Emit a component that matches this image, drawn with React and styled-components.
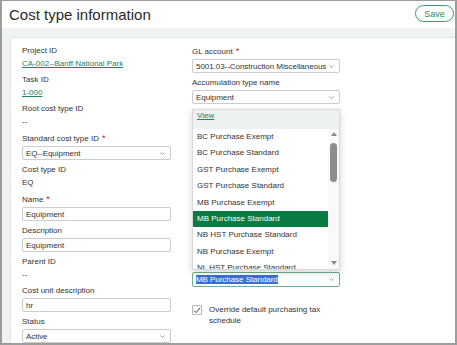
import React from 'react'
import styled, {createGlobalStyle} from 'styled-components'

const Global = createGlobalStyle`
  html, body { margin: 0; padding: 0; }
  body {
    font-family: "Liberation Sans", Arial, sans-serif;
    overflow: hidden;
  }
`

const Frame = styled.div`
  width: 457px;
  height: 345px;
  box-sizing: border-box;
  border: 2px solid #9d9d9d;
  border-top-width: 1px;
  background: #f0f3f3;
  overflow: hidden;
  display: flex;
  flex-direction: column;
`

const Header = styled.header`
  height: 27px;
  flex-shrink: 0;
  background: #fff;
  display: flex;
  align-items: center;
  justify-content: space-between;
  padding: 0 1px 0 7px;
`

const Title = styled.h1`
  margin: 0;
  font-size: 15px;
  font-weight: 400;
  color: #2a2a2a;
`

const SaveButton = styled.button`
  align-self: flex-start;
  margin-top: 4px;
  width: 39px;
  height: 17px;
  padding: 0;
  border: 1px solid #3a9b6b;
  border-radius: 9px;
  background: #fff;
  color: #2f8a5c;
  font-family: inherit;
  font-size: 9px;
`

const Body = styled.main`
  flex: 1;
  padding: 9px 0 0 8px;
`

const Card = styled.section`
  height: 100%;
  box-sizing: border-box;
  background: #fff;
  border: 1px solid #e1e5e5;
  border-right: none;
  border-bottom: none;
  border-radius: 4px 0 0 0;
  padding: 7px 0 0 11px;
  display: grid;
  grid-template-columns: 149px 148px;
  column-gap: 21px;
  align-items: start;
`

const Column = styled.div`
  display: flex;
  flex-direction: column;
  gap: 4px;
`

const Field = styled.div`
  display: flex;
  flex-direction: column;
  gap: 1px;
  margin-top: ${({$push}) => ($push ? `${$push}px` : '0')};
`

const Label = styled.label`
  font-size: 8px;
  line-height: 12px;
  color: #333;
`

const Req = styled.span`
  color: #c8102e;
  font-size: 9px;
  margin-left: 3px;
`

const Value = styled.div`
  font-size: 8px;
  line-height: 12px;
  color: #333;
`

const LinkValue = styled.a`
  font-size: 8px;
  line-height: 12px;
  color: #22845a;
  text-decoration: underline;
  align-self: flex-start;
`

const Input = styled.input`
  height: 14px;
  box-sizing: border-box;
  border: 1px solid #c9cdcd;
  border-radius: 2px;
  padding: 0 3px;
  font-family: inherit;
  font-size: 8px;
  color: #333;
  outline: none;
`

const SelectWrap = styled.div`
  position: relative;
`

const SelectBox = styled.div`
  height: ${({$tall}) => ($tall ? '15px' : '14px')};
  box-sizing: border-box;
  border: 1px solid ${({$focus}) => ($focus ? '#6aae8c' : '#c9cdcd')};
  border-radius: 2px;
  padding: 0 5px 0 3px;
  display: flex;
  align-items: center;
  gap: 3px;
  font-size: 8px;
  color: #333;
`

const SelectText = styled.span`
  flex: 1;
  min-width: 0;
  white-space: nowrap;
  overflow: hidden;
  letter-spacing: -0.05px;
`

const Highlight = styled.span`
  background: #3b6fd4;
  color: #fff;
`

const Popup = styled.div`
  position: absolute;
  left: 0;
  right: 0;
  bottom: calc(100% + 2px);
  height: 161px;
  box-sizing: border-box;
  background: #fff;
  border: 1px solid #d6dada;
  box-shadow: 0 2px 7px rgba(0, 0, 0, 0.18);
  z-index: 2;
  display: flex;
  flex-direction: column;
`

const PopupHead = styled.div`
  height: 19px;
  flex-shrink: 0;
  background: #edf1f2;
  padding-left: 4px;
  display: flex;
  align-items: center;
  font-size: 8px;
`

const PopupBody = styled.div`
  flex: 1;
  display: flex;
  min-height: 0;
`

const OptionList = styled.ul`
  flex: 1;
  margin: 0;
  padding: 0;
  list-style: none;
  overflow: hidden;
`

const Option = styled.li`
  height: 16.4px;
  line-height: 16.4px;
  padding-left: 4px;
  font-size: 8px;
  white-space: nowrap;
  background: ${({$selected}) => ($selected ? '#0a7b43' : 'transparent')};
  color: ${({$selected}) => ($selected ? '#fff' : '#333')};
`

const ScrollTrack = styled.div`
  width: 11px;
  background: #f9f9f9;
  display: flex;
  flex-direction: column;
  align-items: center;
`

const Arrow = styled.div`
  width: 0;
  height: 0;
  border-left: 3.5px solid transparent;
  border-right: 3.5px solid transparent;
  ${({$down}) =>
    $down
      ? 'border-top: 4px solid #8a8a8a; margin-top: auto; margin-bottom: 4px;'
      : 'border-bottom: 4px solid #8a8a8a; margin-top: 3px;'}
`

const Thumb = styled.div`
  width: 7px;
  height: 39px;
  margin-top: 7px;
  border-radius: 4px;
  background: #8d8d8d;
`

const CheckRow = styled.label`
  display: flex;
  align-items: flex-start;
  gap: 7px;
  margin-top: 14px;
`

const CheckBox = styled.span`
  width: 10px;
  height: 10px;
  flex-shrink: 0;
  box-sizing: border-box;
  border: 1px solid #b8b8b8;
  border-radius: 1px;
  display: flex;
  align-items: center;
  justify-content: center;
`

const CheckText = styled.span`
  font-size: 8px;
  line-height: 10.5px;
  color: #333;
  width: 128px;
`

const Chevron = () => (
  <svg width="5" height="3" viewBox="0 0 5 3">
    <path d="M0.5 0.5 L2.5 2.5 L4.5 0.5" fill="none" stroke="#8a8a8a" strokeWidth="0.8" />
  </svg>
)

const Select = ({children, focus, tall, label}) => (
  <SelectBox $focus={focus} $tall={tall} role="combobox" aria-label={label}>
    <SelectText>{children}</SelectText>
    <Chevron />
  </SelectBox>
)

const taxOptions = [
  'BC Purchase Exempt',
  'BC Purchase Standard',
  'GST Purchase Exempt',
  'GST Purchase Standard',
  'MB Purchase Exempt',
  'MB Purchase Standard',
  'NB HST Purchase Standard',
  'NB Purchase Exempt',
  'NL HST Purchase Standard',
  'NS HST Purchase Standard',
]

const App = () => {
  const selected = 'MB Purchase Standard'

  return (
    <Frame>
      <Global />
      <Header>
        <Title>Cost type information</Title>
        <SaveButton>Save</SaveButton>
      </Header>
      <Body>
        <Card>
          <Column>
            <Field>
              <Label>Project ID</Label>
              <LinkValue href="#">CA-002--Banff National Park</LinkValue>
            </Field>
            <Field>
              <Label>Task ID</Label>
              <LinkValue href="#">1-000</LinkValue>
            </Field>
            <Field>
              <Label>Root cost type ID</Label>
              <Value>--</Value>
            </Field>
            <Field>
              <Label>Standard cost type ID<Req>*</Req></Label>
              <Select>EQ--Equipment</Select>
            </Field>
            <Field>
              <Label>Cost type ID</Label>
              <Value>EQ</Value>
            </Field>
            <Field>
              <Label>Name<Req>*</Req></Label>
              <Input defaultValue="Equipment" />
            </Field>
            <Field>
              <Label>Description</Label>
              <Input defaultValue="Equipment" />
            </Field>
            <Field>
              <Label>Parent ID</Label>
              <Value>--</Value>
            </Field>
            <Field>
              <Label>Cost unit description</Label>
              <Input defaultValue="hr" />
            </Field>
            <Field>
              <Label>Status</Label>
              <Select>Active</Select>
            </Field>
          </Column>

          <Column>
            <Field>
              <Label>GL account<Req>*</Req></Label>
              <Select>5001.03--Construction Miscellaneous</Select>
            </Field>
            <Field>
              <Label>Accumulation type name</Label>
              <Select>Equipment</Select>
            </Field>
            <Field $push={164}>
              <SelectWrap>
                <Popup role="listbox">
                  <PopupHead>
                    <LinkValue href="#">View</LinkValue>
                  </PopupHead>
                  <PopupBody>
                    <OptionList>
                      {taxOptions.map((o) => (
                        <Option key={o} $selected={o === selected}>{o}</Option>
                      ))}
                    </OptionList>
                    <ScrollTrack>
                      <Arrow />
                      <Thumb />
                      <Arrow $down />
                    </ScrollTrack>
                  </PopupBody>
                </Popup>
                <Select focus tall label="Purchasing tax schedule">
                  <Highlight>{selected}</Highlight>
                </Select>
              </SelectWrap>
            </Field>
            <CheckRow>
              <CheckBox>
                <svg width="8" height="7" viewBox="0 0 8 7">
                  <path d="M1 3.6 L3 5.6 L7 1" fill="none" stroke="#444" strokeWidth="1" />
                </svg>
              </CheckBox>
              <CheckText>Override default purchasing tax schedule</CheckText>
            </CheckRow>
          </Column>
        </Card>
      </Body>
    </Frame>
  )
}

export default App
